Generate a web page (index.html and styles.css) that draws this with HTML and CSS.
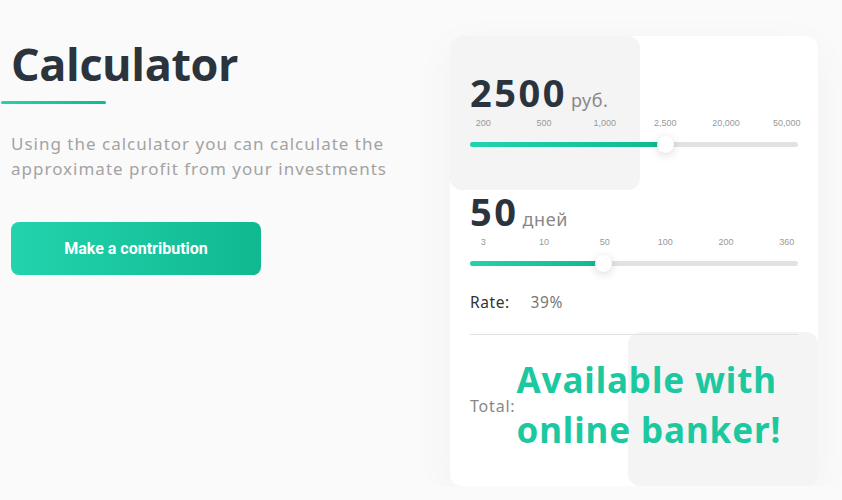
FILE: index.html
```html
<!DOCTYPE html>
<html lang="en">
<head>
  <meta charset="UTF-8">
  <title>Calculator</title>
  <meta name="viewport" content="width=device-width, initial-scale=1">
  <link rel="stylesheet" href="styles.css">
</head>
<body>

  <div class="page">
    <div class="intro">
      <h1>Calculator</h1>
      <div class="underline"></div>
      <p class="lead">Using the calculator you can calculate the approximate profit from your investments</p>
      <button class="btn">Make a contribution</button>
    </div>

    <div class="calc">
      <div class="shade shade-top"></div>
      <div class="shade shade-bottom"></div>

      <div class="field field-sum">
        <div class="value"><span class="num">2500</span> <span class="unit">руб.</span></div>
        <div class="marks">
          <span>200</span><span>500</span><span>1,000</span><span>2,500</span><span>20,000</span><span>50,000</span>
        </div>
        <div class="track"><div class="fill" style="width: 59.5%;"></div><div class="thumb" style="left: 59.5%;"></div></div>
      </div>

      <div class="field field-days">
        <div class="value"><span class="num">50</span> <span class="unit">дней</span></div>
        <div class="marks">
          <span>3</span><span>10</span><span>50</span><span>100</span><span>200</span><span>360</span>
        </div>
        <div class="track"><div class="fill" style="width: 40.5%;"></div><div class="thumb" style="left: 40.5%;"></div></div>
      </div>

      <div class="rate"><span class="label">Rate:</span> <span class="rate-val">39%</span></div>

      <div class="total">
        <span class="total-label">Total:</span><span class="promo">Available with<br>online banker!</span>
      </div>
    </div>
  </div>

</body>
</html>
```

FILE: styles.css
```css
body {
  margin: 0;
  background: #fafafa;
  font-family: "Noto Sans", Arial, sans-serif;
  color: #2b333d;
}
.page {
  display: flex;
  padding: 36px 0 0 11px;
}
.intro {
  width: 439px;
}
h1 {
  margin: 0;
  padding-top: 0;
  font-family: "Open Sans", Arial, sans-serif;
  font-size: 45px;
  font-weight: 700;
  line-height: 56px;
  color: #2b333d;
  letter-spacing: -0.4px;
}
.underline {
  width: 105px;
  height: 3px;
  margin: 9px 0 0 -10px;
  border-radius: 2px;
  background: linear-gradient(90deg, #22d3ad, #10b990);
}
.lead {
  margin: 27px 0 0;
  width: 410px;
  font-size: 17px;
  line-height: 25px;
  color: #a3a3a3;
  letter-spacing: 1px;
}
.btn {
  display: block;
  margin-top: 41px;
  width: 250px;
  height: 53px;
  border: none;
  border-radius: 8px;
  background: linear-gradient(90deg, #22d3ad, #10b990);
  color: white;
  font-family: Roboto, Arial, sans-serif;
  font-weight: 700;
  font-size: 16px;
  cursor: pointer;
}
.calc {
  position: relative;
  width: 328px;
  height: 450px;
  padding: 0 20px;
  background: white;
  border-radius: 12px;
  box-shadow: 0 10px 40px rgba(0,0,0,0.04);
}
.shade {
  position: absolute;
  width: 190px;
  height: 154px;
  background: #f4f4f4;
  border-radius: 12px;
}
.shade-top {
  top: 0;
  left: 0;
}
.shade-bottom {
  bottom: 0;
  right: 0;
}
.field {
  position: relative;
}
.field-sum {
  padding-top: 34px;
}
.field-days {
  padding-top: 42px;
}
.value {
  height: 44px;
  display: flex;
  align-items: baseline;
}
.num {
  font-family: "Noto Sans", Arial, sans-serif;
  font-weight: 700;
  font-size: 38px;
  line-height: 44px;
  color: #2b333d;
  letter-spacing: 2.5px;
}
.unit {
  margin-left: 4px;
  font-size: 18px;
  color: #888;
  letter-spacing: 0.6px;
}
.marks {
  display: grid;
  grid-template-columns: repeat(6, 1fr);
  width: 364px;
  margin: 4px 0 0 -17px;
  font-family: Arial, sans-serif;
  font-size: 9px;
  color: #999;
  text-align: center;
}
.track {
  position: relative;
  height: 5px;
  margin-top: 14px;
  border-radius: 3px;
  background: #e2e2e2;
}
.fill {
  height: 100%;
  border-radius: 3px;
  background: linear-gradient(90deg, #22d3ad, #10b990);
}
.thumb {
  position: absolute;
  top: -6px;
  width: 17px;
  height: 17px;
  margin-left: -8px;
  border-radius: 50%;
  background: white;
  box-shadow: 0 2px 10px rgba(0,0,0,0.15);
}
.rate {
  position: relative;
  margin-top: 25px;
  padding-bottom: 21px;
  border-bottom: 1px solid #e2e2e2;
  font-size: 15.5px;
  letter-spacing: 0.6px;
}
.rate .label {
  color: #333;
}
.rate-val {
  margin-left: 16px;
  color: #777;
}
.total {
  position: relative;
  display: flex;
  align-items: center;
  height: 140px;
}
.total-label {
  font-size: 16px;
  color: #888;
  letter-spacing: 0.8px;
  margin-top: 2px;
}
.promo {
  margin-left: 1px;
  font-weight: 700;
  font-size: 35px;
  line-height: 50px;
  color: #1cc8a0;
  letter-spacing: 0.9px;
}
```
